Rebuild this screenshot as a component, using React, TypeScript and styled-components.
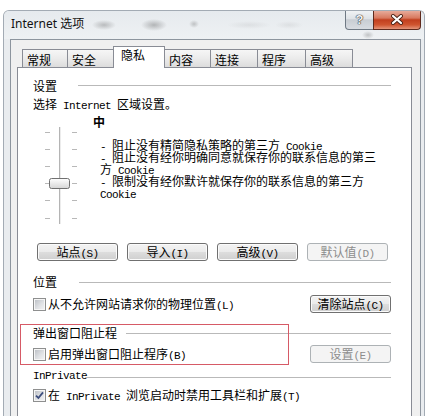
import React from "react";
import styled, { createGlobalStyle } from "styled-components";

const Global = createGlobalStyle`
  html, body { margin: 0; padding: 0; background: #ffffff; }
  body {
    font-family: "Noto Sans CJK SC", "Noto Sans", sans-serif;
    font-size: 12px;
    color: #000;
  }
`;

const Page = styled.div`
  width: 425px;
  height: 416px;
  overflow: hidden;
  box-sizing: border-box;
  padding: 10px 0 0 3px;
`;

const Window = styled.div`
  width: 422px;
  height: 406px;
  box-sizing: border-box;
  border: 1px solid #a3abb4;
  border-bottom: none;
  border-radius: 6px 6px 0 0;
  background: #e9ecef;
  display: flex;
  flex-direction: column;
  overflow: hidden;
`;

const TitleBar = styled.div`
  height: 28px;
  flex: none;
  display: flex;
  align-items: flex-start;
  padding-left: 7px;
  background:
    radial-gradient(ellipse 12px 5px at 100px 14px, rgba(80, 80, 80, 0.32), transparent),
    radial-gradient(ellipse 13px 6px at 150px 14px, rgba(70, 70, 70, 0.34), transparent),
    radial-gradient(ellipse 5px 4px at 190px 13px, rgba(90, 90, 90, 0.3), transparent),
    radial-gradient(ellipse 22px 4px at 245px 14px, rgba(120, 120, 120, 0.12), transparent),
    radial-gradient(ellipse 14px 4px at 285px 14px, rgba(120, 120, 120, 0.12), transparent),
    radial-gradient(ellipse 6px 4px at 364px 24px, rgba(90, 90, 90, 0.3), transparent),
    linear-gradient(#e6eaee, #eef1f3);
`;

const Title = styled.div`
  font-family: "Noto Sans", "Noto Sans CJK SC", sans-serif;
  font-size: 12px;
  line-height: 26px;
  color: #111;
`;

const Controls = styled.div`
  margin-left: auto;
  margin-right: 3px;
  margin-top: -1px;
  display: flex;
`;

const HelpButton = styled.div`
  width: 29px;
  height: 20px;
  box-sizing: border-box;
  border: 1px solid #6f7984;
  border-top: none;
  border-radius: 0 0 0 4px;
  background: linear-gradient(#f2f4f6, #dfe3e7 45%, #c8cdd3 52%, #d8dce1);
  display: flex;
  align-items: center;
  justify-content: center;
  font-family: "Liberation Sans", sans-serif;
  font-weight: bold;
  font-size: 13px;
  color: #f3f3f3;
  text-shadow: 0 0 1px #333, 0 0 1px #333, 0 0 1px #333;
`;

const CloseButton = styled.div`
  width: 48px;
  height: 20px;
  margin-left: -1px;
  box-sizing: border-box;
  border: 1px solid #5e2a1d;
  border-top: none;
  border-radius: 0 0 4px 0;
  background: linear-gradient(#e9b2a3, #d8795f 42%, #c13f1e 52%, #cf5530 78%, #e4957a);
  display: flex;
  align-items: center;
  justify-content: center;
`;

const Client = styled.div`
  flex: 1;
  margin: 0 3px 0 6px;
  border: 1px solid #8d959e;
  border-bottom: none;
  background: #f0f0f0;
  padding: 6px 8px 0 6px;
  display: flex;
  flex-direction: column;
  min-height: 0;
`;

const TabRow = styled.div`
  height: 21px;
  flex: none;
  display: flex;
  align-items: flex-end;
  padding-left: 5px;
  position: relative;
  z-index: 1;
`;

const Tab = styled.div<{ $w: number; $active?: boolean }>`
  position: relative;
  z-index: ${(p) => (p.$active ? 2 : 1)};
  width: ${(p) => p.$w}px;
  height: ${(p) => (p.$active ? 22 : 18)}px;
  margin-bottom: ${(p) => (p.$active ? -1 : 0)}px;
  box-sizing: border-box;
  border: 1px solid #898c95;
  border-bottom: none;
  & + & { margin-left: -1px; }
  background: ${(p) =>
    p.$active ? "#ffffff" : "linear-gradient(#f6f6f6, #ebebeb 50%, #dcdcdc)"};
  padding: ${(p) => (p.$active ? "1px 0 0 7px" : "3px 0 0 4px")};
  font-size: 12px;
  line-height: 14px;
  white-space: nowrap;
`;

const Panel = styled.div`
  flex: 1;
  background: #ffffff;
  border: 1px solid #898c95;
  border-bottom: none;
  padding: 11px 20px 0 15px;
  display: flex;
  flex-direction: column;
`;

/* Latin run in SimSun-like half width: 6px per character */
const L = styled.span`
  font-family: "Liberation Mono", "DejaVu Sans Mono", monospace;
  font-size: 11px;
  letter-spacing: -0.6px;
  line-height: 0;
`;

const Text = styled.span`
  line-height: 14px;
  white-space: nowrap;
`;

const GroupHeader = styled.div<{ $mt: number }>`
  display: flex;
  align-items: center;
  height: 14px;
  margin-top: ${(p) => p.$mt}px;
`;

const Rule = styled.div<{ $gap: number; $dy?: number }>`
  flex: 1;
  height: 1px;
  background: #b9b9b9;
  margin-left: ${(p) => p.$gap}px;
  transform: translateY(${(p) => p.$dy ?? 0}px);
`;

const Intro = styled.div`
  margin-top: 4px;
  height: 14px;
  line-height: 14px;
  white-space: nowrap;
`;

const SliderBlock = styled.div`
  margin-top: 4px;
  display: flex;
  align-items: flex-start;
`;

const SliderArt = styled.svg`
  flex: none;
  margin-left: 12px;
  margin-top: 12px;
  display: block;
`;

const LevelText = styled.div`
  margin-left: 15px;
  display: flex;
  flex-direction: column;
`;

const Level = styled.div`
  font-weight: bold;
  line-height: 14px;
`;

const Bullets = styled.div`
  margin-top: 10px;
  padding-left: 7px;
  width: 282px;
  line-height: 12px;
`;

const ButtonRow = styled.div`
  margin-top: 19px;
  padding-left: 4px;
  display: flex;
  gap: 9px;
`;

const Button = styled.div<{ $disabled?: boolean }>`
  width: 81px;
  height: 18px;
  box-sizing: border-box;
  flex: none;
  border: 1px solid ${(p) => (p.$disabled ? "#adb2b5" : "#707070")};
  border-radius: 3px;
  background: ${(p) =>
    p.$disabled
      ? "#f4f4f4"
      : "linear-gradient(#f3f3f3, #ebebeb 48%, #dddddd 52%, #cfcfcf)"};
  box-shadow: inset 0 0 0 1px ${(p) => (p.$disabled ? "#f4f4f4" : "#fbfbfb")};
  color: ${(p) => (p.$disabled ? "#8d8d8d" : "#000")};
  text-align: center;
  line-height: 16px;
  white-space: nowrap;
`;

const CheckRow = styled.div<{ $mt: number; $h: number }>`
  margin-top: ${(p) => p.$mt}px;
  height: ${(p) => p.$h}px;
  display: flex;
  align-items: center;
  justify-content: space-between;
`;

const CheckLabel = styled.label`
  display: flex;
  align-items: center;
`;

const Box = styled.span`
  width: 13px;
  height: 13px;
  box-sizing: border-box;
  flex: none;
  margin-right: 2px;
  border: 1px solid #8e8f8f;
  background: linear-gradient(135deg, #b8bcc2 0%, #dfe1e4 55%, #f4f4f5 100%);
  box-shadow: inset 0 0 0 1px #f6f6f6;
  display: flex;
  align-items: center;
  justify-content: center;
`;

const Highlighted = styled.div`
  position: relative;
  margin-top: 13px;
`;

const RedMark = styled.div`
  position: absolute;
  left: -13px;
  top: -2px;
  width: 269px;
  height: 41px;
  box-sizing: border-box;
  border: 1px solid #d65a66;
  pointer-events: none;
`;

const Check = ({ checked }: { checked?: boolean }) => (
  <Box>
    {checked && (
      <svg width="9" height="9" viewBox="0 0 9 9">
        <path d="M1 4.6 L3.4 7 L8 1.4" fill="none" stroke="#3d4e7e" strokeWidth="1.8" />
      </svg>
    )}
  </Box>
);

const ticks = [5, 22, 39, 56, 73, 91];

const Slider = () => (
  <SliderArt width="33" height="97" viewBox="0 0 33 97">
    <defs>
      <linearGradient id="thumb" x1="0" y1="0" x2="0" y2="1">
        <stop offset="0" stopColor="#ffffff" />
        <stop offset="1" stopColor="#d5d5d5" />
      </linearGradient>
    </defs>
    {ticks.map((y) => (
      <g key={y} stroke="#b8b8b8">
        <line x1="0" x2="5" y1={y + 0.5} y2={y + 0.5} />
        <line x1="27" x2="32" y1={y + 0.5} y2={y + 0.5} />
      </g>
    ))}
    <line x1="14.5" x2="14.5" y1="0" y2="97" stroke="#b4b4b4" />
    <line x1="15.5" x2="15.5" y1="0" y2="97" stroke="#ececec" />
    <rect x="4.5" y="51.5" width="20" height="10" rx="2" fill="url(#thumb)" stroke="#707070" />
  </SliderArt>
);

const tabs = [
  { label: "常规", w: 46 },
  { label: "安全", w: 47 },
  { label: "隐私", w: 52, active: true },
  { label: "内容", w: 47 },
  { label: "连接", w: 48 },
  { label: "程序", w: 49 },
  { label: "高级", w: 48 },
];

export default function App() {
  return (
    <>
      <Global />
      <Page>
        <Window>
          <TitleBar>
            <Title>Internet 选项</Title>
            <Controls>
              <HelpButton>?</HelpButton>
              <CloseButton>
                <svg width="14" height="11" viewBox="0 0 14 11">
                  <path d="M3 2 L11 9 M11 2 L3 9" stroke="#4a2418" strokeWidth="4" strokeLinecap="round" />
                  <path d="M3 2 L11 9 M11 2 L3 9" stroke="#ffffff" strokeWidth="2.2" strokeLinecap="round" />
                </svg>
              </CloseButton>
            </Controls>
          </TitleBar>
          <Client>
            <TabRow>
              {tabs.map((t) => (
                <Tab key={t.label} $w={t.w} $active={t.active}>
                  {t.label}
                </Tab>
              ))}
            </TabRow>
            <Panel>
              <GroupHeader $mt={0}>
                <Text>设置</Text>
                <Rule $gap={21} $dy={-1} />
              </GroupHeader>
              <Intro>
                选择<L> Internet </L>区域设置。
              </Intro>
              <SliderBlock>
                <Slider />
                <LevelText>
                  <Level>中</Level>
                  <Bullets>
                    <div>
                      <L>- </L>阻止没有精简隐私策略的第三方<L> Cookie</L>
                    </div>
                    <div>
                      <L>- </L>阻止没有经你明确同意就保存你的联系信息的第三方<L> Cookie</L>
                    </div>
                    <div>
                      <L>- </L>限制没有经你默许就保存你的联系信息的第三方<L> Cookie</L>
                    </div>
                  </Bullets>
                </LevelText>
              </SliderBlock>
              <ButtonRow>
                <Button>
                  站点<L>(S)</L>
                </Button>
                <Button>
                  导入<L>(I)</L>
                </Button>
                <Button>
                  高级<L>(V)</L>
                </Button>
                <Button $disabled>
                  默认值<L>(D)</L>
                </Button>
              </ButtonRow>
              <GroupHeader $mt={14}>
                <Text>位置</Text>
                <Rule $gap={22} />
              </GroupHeader>
              <CheckRow $mt={6} $h={18}>
                <CheckLabel>
                  <Check />
                  <Text>
                    从不允许网站请求你的物理位置<L>(L)</L>
                  </Text>
                </CheckLabel>
                <Button>
                  清除站点<L>(C)</L>
                </Button>
              </CheckRow>
              <Highlighted>
                <GroupHeader $mt={0}>
                  <Text>弹出窗口阻止程</Text>
                  <Rule $gap={9} />
                </GroupHeader>
                <CheckRow $mt={5} $h={18}>
                  <CheckLabel>
                    <Check />
                    <Text>
                      启用弹出窗口阻止程序<L>(B)</L>
                    </Text>
                  </CheckLabel>
                  <Button $disabled>
                    设置<L>(E)</L>
                  </Button>
                </CheckRow>
                <RedMark />
              </Highlighted>
              <GroupHeader $mt={4}>
                <Text>
                  <L>InPrivate</L>
                </Text>
                <Rule $gap={-1} $dy={3} />
              </GroupHeader>
              <CheckRow $mt={7} $h={14}>
                <CheckLabel>
                  <Check checked />
                  <Text>
                    在<L> InPrivate </L>浏览启动时禁用工具栏和扩展<L>(T)</L>
                  </Text>
                </CheckLabel>
              </CheckRow>
            </Panel>
          </Client>
        </Window>
      </Page>
    </>
  );
}
